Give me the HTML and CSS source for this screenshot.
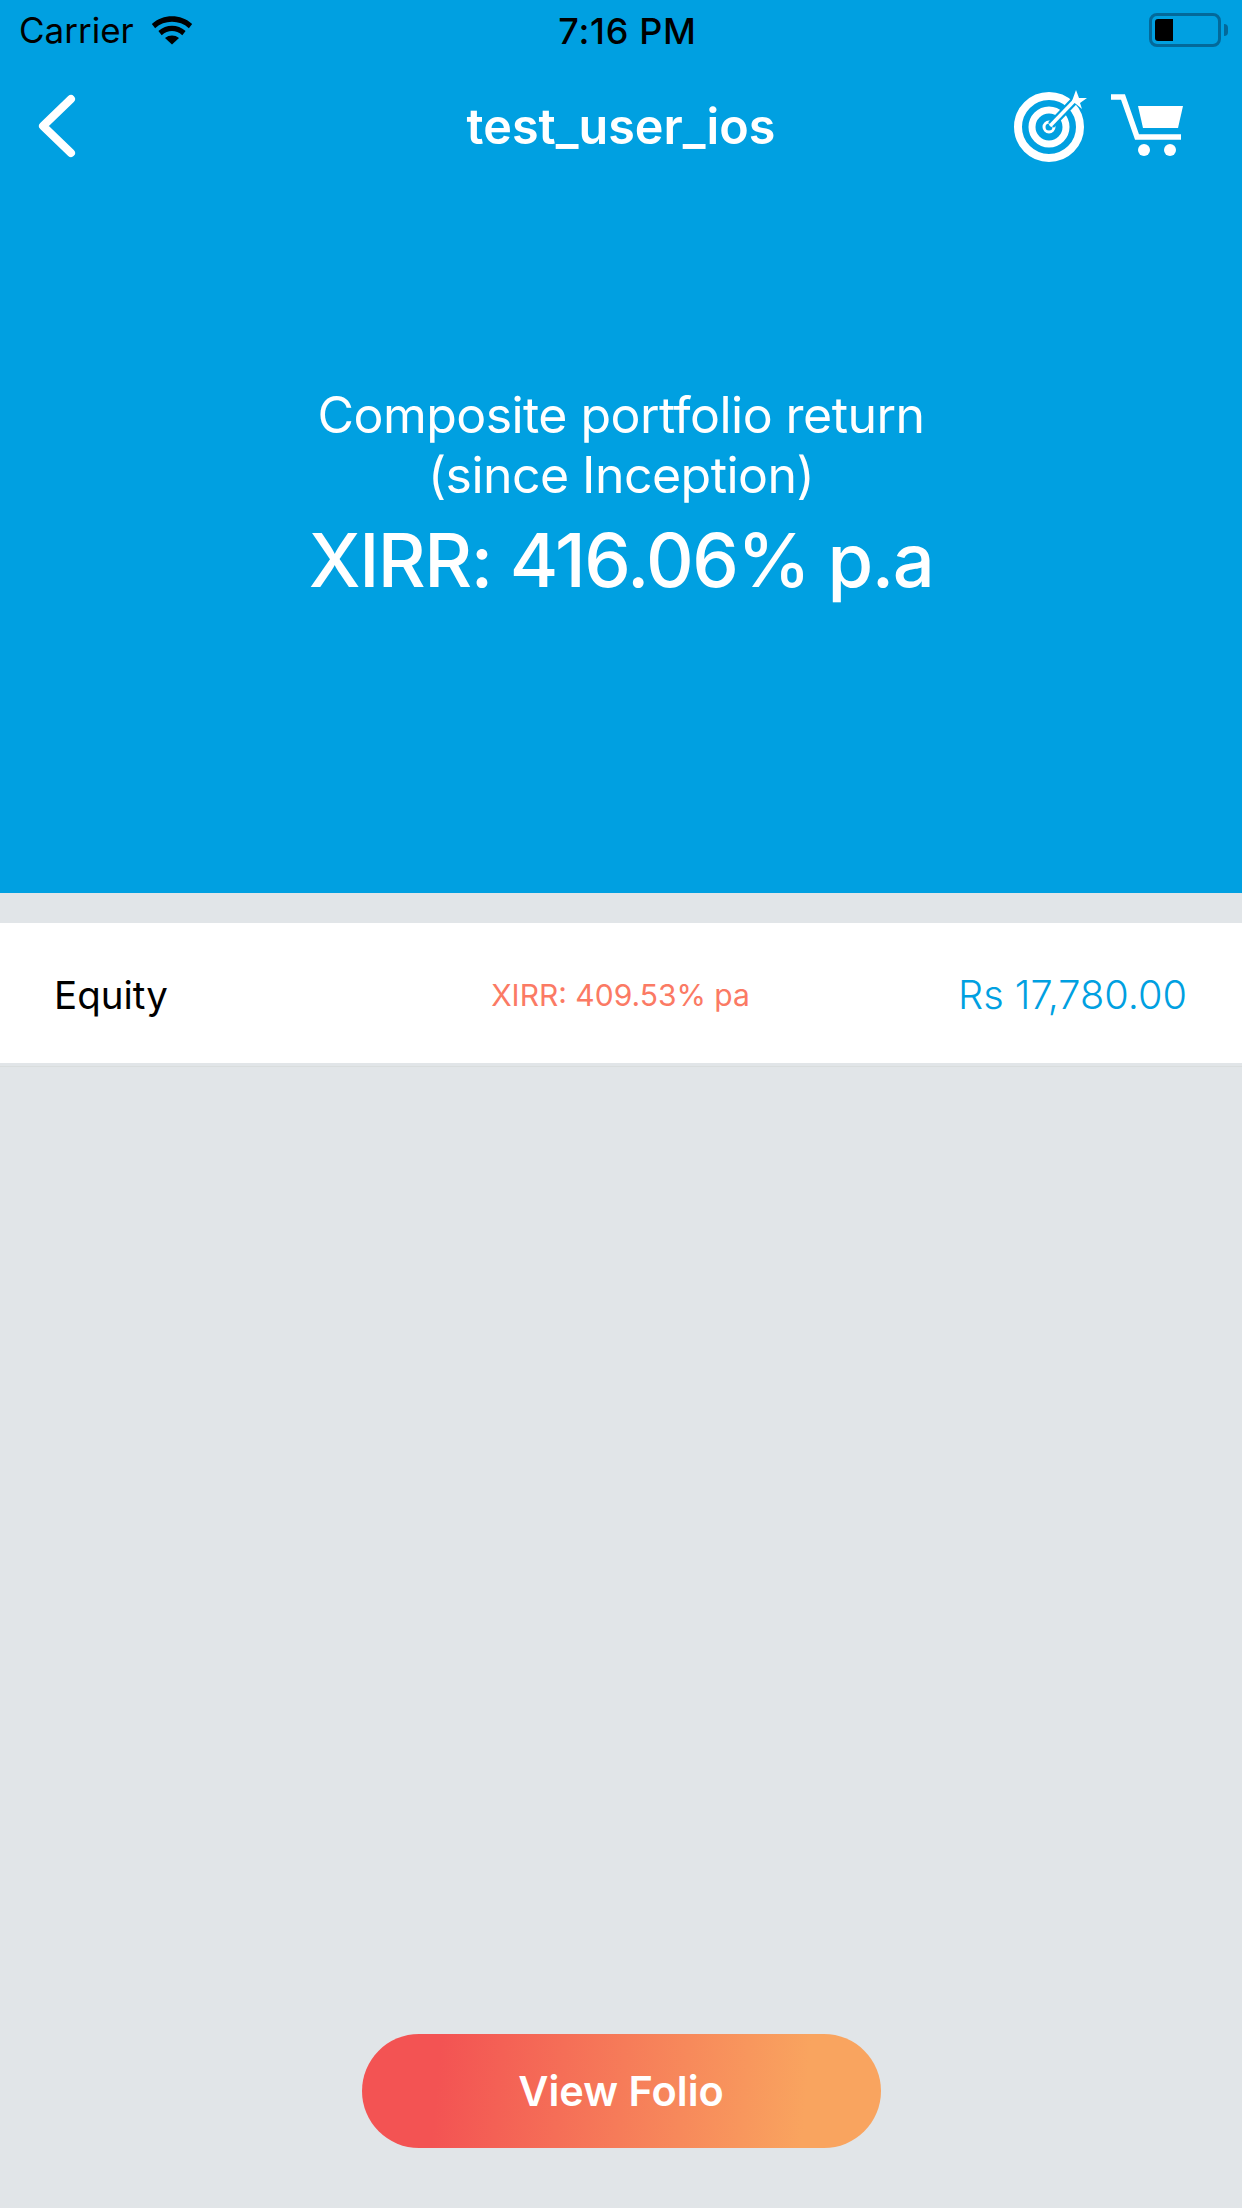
FILE: index.html
```html
<!DOCTYPE html>
<html lang="en">
<head>
<meta charset="UTF-8">
<title>Portfolio</title>
<link rel="stylesheet" href="styles.css">
</head>
<body>
<div class="screen">
  <section class="hero">
    <div class="statusbar">
      <div class="status-left">
        <span>Carrier</span>
        <svg class="wifi" width="42" height="30" viewBox="0 0 44 32">
          <path d="M0.5 9.5C12.5 -1.5 31.5 -1.5 43.5 9.5L40 14C30 5 14 5 4 14Z"/>
          <path d="M7.5 17C16 9.5 28 9.5 36.5 17L33 21.5C26 15.5 18 15.5 11 21.5Z"/>
          <path d="M14.5 24.5C19 21 25 21 29.5 24.5L22 31.5Z"/>
        </svg>
      </div>
      <div class="status-time">7:16 PM</div>
      <div class="status-right">
        <div class="battery"><div class="battery-level"></div></div>
        <div class="battery-cap"></div>
      </div>
    </div>

    <header class="navbar">
      <svg class="back" width="40" height="64" viewBox="0 0 40 64">
        <path d="M35 5L7 32L35 59" fill="none" stroke="#fff" stroke-width="8" stroke-linecap="round" stroke-linejoin="round"/>
      </svg>
      <h1>test_user_ios</h1>
      <div class="nav-icons">
        <svg width="74" height="74" viewBox="0 0 74 74">
          <circle cx="35" cy="38" r="31" fill="none" stroke="#fff" stroke-width="8"/>
          <circle cx="35" cy="38" r="17" fill="none" stroke="#fff" stroke-width="7"/>
          <circle cx="35" cy="38" r="5" fill="none" stroke="#fff" stroke-width="3"/>
          <path d="M37 36L62 10" stroke="#00a0e1" stroke-width="8"/>
          <path d="M36 37L62 10" stroke="#fff" stroke-width="3.5"/>
          <path d="M58 12L62 1L65 9L73 9L66 14L68 20L62 15Z" fill="#fff"/>
        </svg>
        <svg width="74" height="64" viewBox="0 0 74 64">
          <path d="M0 3H12L26 43H70" fill="none" stroke="#fff" stroke-width="5.5"/>
          <path d="M27 12H72L67 34H32Z" fill="#fff"/>
          <circle cx="33" cy="56" r="6" fill="#fff"/>
          <circle cx="59" cy="56" r="6" fill="#fff"/>
        </svg>
      </div>
    </header>

    <div class="summary">
      <p class="summary-label">Composite portfolio return<br>(since Inception)</p>
      <p class="summary-value">XIRR: 416.06% p.a</p>
    </div>
  </section>

  <main class="content">
    <div class="row">
      <span class="row-name">Equity</span>
      <span class="row-xirr">XIRR: 409.53% pa</span>
      <span class="row-amount">Rs 17,780.00</span>
    </div>
    <div class="row-line"></div>
  </main>

  <footer class="actions">
    <button type="button" class="folio-btn">View Folio</button>
  </footer>
</div>
</body>
</html>
```

FILE: styles.css
```css
html, body {
  margin: 0;
  padding: 0;
}
body {
  font-family: 'Inter', 'Noto Sans', sans-serif;
  background: #e1e5e8;
}
.screen {
  width: 1242px;
  height: 2208px;
  display: flex;
  flex-direction: column;
  overflow: hidden;
}
.hero {
  height: 893px;
  background: #00a0e1;
  color: white;
  display: flex;
  flex-direction: column;
}
.statusbar {
  height: 60px;
  display: grid;
  grid-template-columns: 1fr auto 1fr;
  align-items: center;
  padding: 0 14px 0 19px;
  color: black;
  font-size: 35px;
}
.status-left {
  display: flex;
  align-items: center;
  gap: 17px;
}
.status-time {
  font-size: 36px;
  font-weight: 500;
  letter-spacing: 0.7px;
  margin-left: 8px;
  padding-top: 2px;
}
.status-right {
  display: flex;
  align-items: center;
  justify-content: flex-end;
}
.battery {
  width: 72px;
  height: 34px;
  box-sizing: border-box;
  border: 3px solid #03699a;
  border-radius: 8px;
  padding: 3px;
}
.battery-level {
  width: 18px;
  height: 22px;
  background: black;
  border-radius: 3px 0 0 3px;
}
.battery-cap {
  width: 4px;
  height: 12px;
  margin-left: 3px;
  background: #03699a;
  border-radius: 0 4px 4px 0;
}
.navbar {
  height: 132px;
  display: grid;
  grid-template-columns: 1fr auto 1fr;
  align-items: center;
  padding: 0 57px;
}
.navbar h1 {
  margin: 0;
  font-size: 48.5px;
  font-weight: 600;
}
.back {
  margin-left: -21px;
}
.nav-icons {
  display: flex;
  justify-content: flex-end;
  align-items: center;
  gap: 23px;
}
.nav-icons svg {
  filter: blur(0.6px); /* the source icons are soft upscaled bitmaps */
}
.summary {
  padding-top: 193px;
  text-align: center;
}
.summary p {
  margin: 0;
}
.summary-label {
  font-size: 50px;
  line-height: 60px;
  font-weight: 400;
  letter-spacing: -0.55px;
}
.summary-value {
  font-size: 74px;
  line-height: 90px;
  font-weight: 500;
  letter-spacing: -1.5px;
  padding-top: 10px;
}
.content {
  flex: 1;
  padding-top: 30px;
}
.row {
  height: 140px;
  box-sizing: border-box;
  background: white;
  display: grid;
  grid-template-columns: 1fr auto 1fr;
  align-items: center;
  padding: 3px 55px 0 54px;
}
.row-line {
  height: 1px;
  margin-top: 3px;
  background: #d9dddd;
}
.row-name {
  font-size: 38.5px;
  color: black;
}
.row-xirr {
  font-size: 30px;
  color: #fb7a64;
}
.row-amount {
  font-size: 39.7px;
  font-weight: 300;
  color: #00a0e1;
  text-align: right;
}
.actions {
  display: flex;
  justify-content: center;
  padding-bottom: 60px;
}
.folio-btn {
  width: 519px;
  height: 114px;
  border: none;
  border-radius: 57px;
  background: linear-gradient(95deg, #f35353 15%, #f9a45f 85%);
  color: white;
  font-family: inherit;
  font-size: 41.5px;
  font-weight: 600;
}
```
